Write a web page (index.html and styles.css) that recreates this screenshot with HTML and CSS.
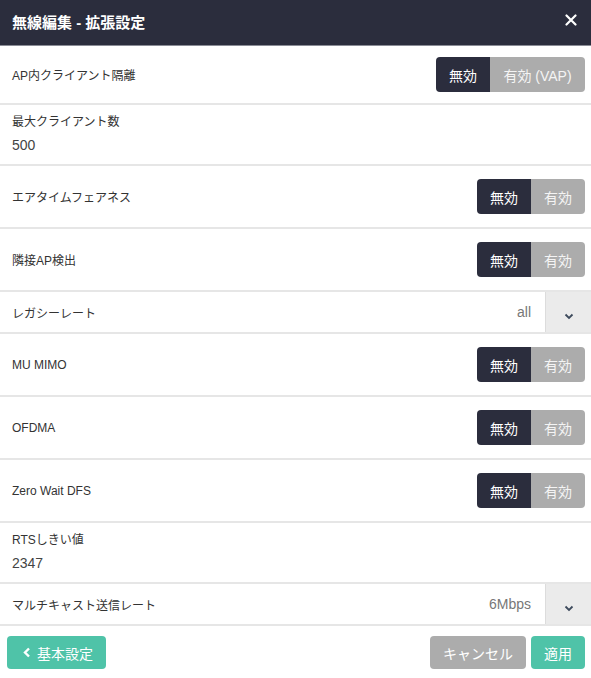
FILE: index.html
```html
<!DOCTYPE html>
<html lang="ja">
<head>
<meta charset="UTF-8" />
<meta name="viewport" content="width=device-width, initial-scale=1" />
<title>無線編集 - 拡張設定</title>
<link rel="stylesheet" href="styles.css">
</head>
<body>

<div class="modal">
  <div class="modal-header">
    <span class="modal-title">無線編集 - 拡張設定</span>
    <svg class="close" width="12" height="12" viewBox="0 0 12 12">
      <path d="M1.5 1.5 L10.5 10.5 M10.5 1.5 L1.5 10.5" stroke="#fff" stroke-width="2.2" stroke-linecap="round" />
    </svg>
  </div>

  <div class="row row-toggle row-first">
    <span class="label">AP内クライアント隔離</span>
    <div class="toggle">
      <span class="seg on">無効</span>
      <span class="seg off wide">有効 (VAP)</span>
    </div>
  </div>

  <div class="row row-input">
    <span class="label">最大クライアント数</span>
    <span class="value">500</span>
  </div>

  <div class="row row-toggle">
    <span class="label">エアタイムフェアネス</span>
    <div class="toggle">
      <span class="seg on">無効</span>
      <span class="seg off">有効</span>
    </div>
  </div>

  <div class="row row-toggle">
    <span class="label">隣接AP検出</span>
    <div class="toggle">
      <span class="seg on">無効</span>
      <span class="seg off">有効</span>
    </div>
  </div>

  <div class="row row-select">
    <span class="label">レガシーレート</span>
    <span class="selected">all</span>
    <span class="arrow">
      <svg width="10" height="7" viewBox="0 0 10 7"><path d="M1.5 1.5 L5 5 L8.5 1.5" fill="none" stroke="#3d4a5c" stroke-width="1.8" /></svg>
    </span>
  </div>

  <div class="row row-toggle">
    <span class="label">MU MIMO</span>
    <div class="toggle">
      <span class="seg on">無効</span>
      <span class="seg off">有効</span>
    </div>
  </div>

  <div class="row row-toggle">
    <span class="label">OFDMA</span>
    <div class="toggle">
      <span class="seg on">無効</span>
      <span class="seg off">有効</span>
    </div>
  </div>

  <div class="row row-toggle">
    <span class="label">Zero Wait DFS</span>
    <div class="toggle">
      <span class="seg on">無効</span>
      <span class="seg off">有効</span>
    </div>
  </div>

  <div class="row row-input">
    <span class="label">RTSしきい値</span>
    <span class="value">2347</span>
  </div>

  <div class="row row-select">
    <span class="label">マルチキャスト送信レート</span>
    <span class="selected">6Mbps</span>
    <span class="arrow">
      <svg width="10" height="7" viewBox="0 0 10 7"><path d="M1.5 1.5 L5 5 L8.5 1.5" fill="none" stroke="#3d4a5c" stroke-width="1.8" /></svg>
    </span>
  </div>

  <div class="modal-footer">
    <button class="btn btn-green btn-back">
      <svg width="8" height="11" viewBox="0 0 8 11"><path d="M6 1.5 L2 5.5 L6 9.5" fill="none" stroke="#fff" stroke-width="2.4" /></svg>
      基本設定
    </button>
    <div class="footer-right">
      <button class="btn btn-gray">キャンセル</button>
      <button class="btn btn-green btn-apply">適用</button>
    </div>
  </div>
</div>

</body>
</html>
```

FILE: styles.css
```css
html, body {
  margin: 0; padding: 0;
  background: #fff;
  font-family: "Liberation Sans", "Noto Sans CJK JP", sans-serif;
  color: #333;
}
.modal {
  width: 591px;
  height: 678px;
  overflow: hidden;
}
.modal-header {
  height: 46px;
  background: #2b2d3d;
  display: flex;
  justify-content: space-between;
  align-items: center;
  padding: 0 14px 0 12px;
  box-sizing: border-box;
  border-bottom: 1px solid #8a8c96;
}
.modal-title {
  color: #fff;
  font-size: 15px;
  font-weight: bold;
  margin-top: -2px;
}
.close {
  margin-top: -6px;
}
.row {
  display: flex;
  align-items: center;
  border-bottom: 2px solid #e6e6e6;
  padding: 0 6px 0 12px;
}
.label {
  font-size: 12px;
  color: #333;
}
.row-toggle {
  height: 61px;
  justify-content: space-between;
}
.row-first {
  height: 57px;
}
.toggle {
  display: flex;
  height: 35px;
  border-radius: 4px;
  overflow: hidden;
}
.seg {
  width: 54px;
  display: flex;
  align-items: center;
  justify-content: center;
  font-size: 14px;
}
.seg.wide {
  width: 95px;
}
.seg.on {
  background: #2b2d3d;
  color: #fff;
}
.seg.off {
  background: #acacac;
  color: #f4f4f4;
}
.row-input {
  height: 59px;
  flex-direction: column;
  align-items: flex-start;
  justify-content: center;
  gap: 8px;
}
.row-input .label {
  margin-top: -4px;
}
.value {
  font-size: 14px;
  color: #444;
}
.row-select {
  height: 40px;
  padding-right: 0;
}
.row-select .label {
  flex: 1;
}
.selected {
  font-size: 14px;
  color: #777;
  margin-right: 14px;
}
.arrow {
  width: 46px;
  align-self: stretch;
  background: #ebebeb;
  border-left: 1px solid #dcdcdc;
  display: flex;
  align-items: center;
  justify-content: center;
  padding-top: 8px;
  box-sizing: border-box;
}
.modal-footer {
  display: flex;
  justify-content: space-between;
  padding: 10px 6px 0 7px;
}
.footer-right {
  display: flex;
  gap: 5px;
}
.btn {
  height: 33px;
  border: none;
  border-radius: 4px;
  color: #fff;
  font-family: "Liberation Sans", "Noto Sans CJK JP", sans-serif;
  font-size: 14px;
  padding: 0 12px;
  display: flex;
  align-items: center;
  gap: 6px;
}
.btn-green {
  background: #4fc3a8;
}
.btn-gray {
  background: #acacac;
  width: 96px;
  justify-content: center;
}
.btn-apply {
  width: 54px;
  justify-content: center;
  padding: 0;
}
.btn-back {
  width: 99px;
  padding-left: 16px;
}
```
